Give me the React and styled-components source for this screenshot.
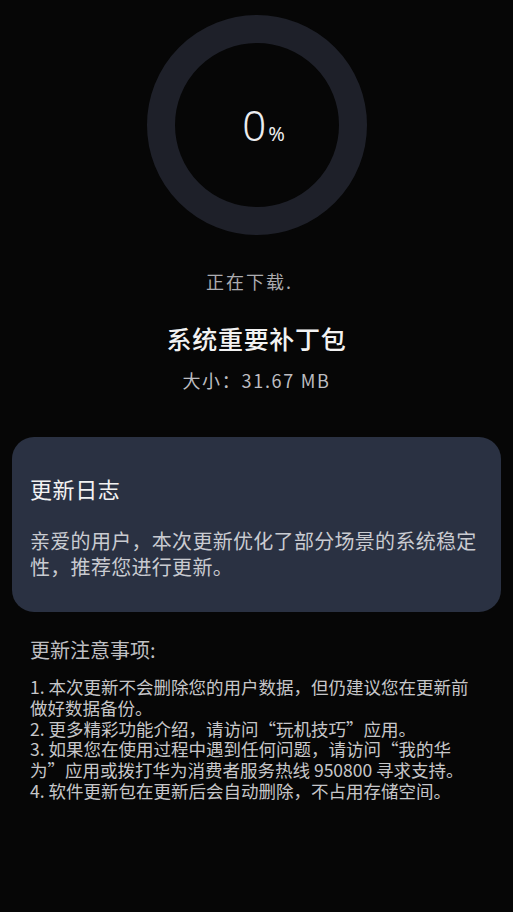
import React from "react"
import styled, { createGlobalStyle } from "styled-components"

const notes = [
  "1. 本次更新不会删除您的用户数据，但仍建议您在更新前做好数据备份。",
  "2. 更多精彩功能介绍，请访问“玩机技巧”应用。",
  "3. 如果您在使用过程中遇到任何问题，请访问“我的华为”应用或拨打华为消费者服务热线 950800 寻求支持。",
  "4. 软件更新包在更新后会自动删除，不占用存储空间。",
]

const App = () => {
  const progress = 0
  const r = 96
  const c = 2 * Math.PI * r

  return (
    <Page>
      <GlobalStyle />
      <Ring>
        <svg width="220" height="220" viewBox="0 0 220 220">
          <circle cx="110" cy="110" r={r} fill="none" stroke="#1e2029" strokeWidth="28" />
          <circle
            cx="110"
            cy="110"
            r={r}
            fill="none"
            stroke="#3d7dff"
            strokeWidth="28"
            strokeDasharray={`${(c * progress) / 100} ${c}`}
            transform="rotate(-90 110 110)"
          />
        </svg>
        <Percent>
          {progress}
          <small>%</small>
        </Percent>
      </Ring>

      <Status>
        正在下载.<Dots>..</Dots>
      </Status>
      <Title>系统重要补丁包</Title>
      <Size>大小：31.67 MB</Size>

      <Card>
        <CardTitle>更新日志</CardTitle>
        <CardText>亲爱的用户，本次更新优化了部分场景的系统稳定性，推荐您进行更新。</CardText>
      </Card>

      <Notes>
        <NotesTitle>更新注意事项:</NotesTitle>
        <NoteList>
          {notes.map((note, index) => (
            <NoteItem key={index}>{note}</NoteItem>
          ))}
        </NoteList>
      </Notes>
    </Page>
  )
}

export default App

const GlobalStyle = createGlobalStyle`
  html, body {
    margin: 0;
    padding: 0;
    background: #060606;
  }
  body {
    font-family: "Noto Sans CJK SC", "Noto Sans", sans-serif;
  }
`

const Page = styled.div`
  min-height: 100vh;
  background: #060606;
  display: flex;
  flex-direction: column;
  align-items: center;
  padding-top: 15px;
  box-sizing: border-box;
`

const Ring = styled.div`
  display: grid;
  place-items: center;
  width: 220px;
  height: 220px;

  & > * {
    grid-area: 1 / 1;
  }
`

const Percent = styled.div`
  font-family: "Noto Sans", "Noto Sans CJK SC", sans-serif;
  font-size: 42px;
  font-weight: 300;
  color: #ececee;
  line-height: 1;
  display: flex;
  align-items: baseline;
  margin-left: 14px;

  small {
    font-size: 20px;
    font-weight: 400;
    margin-left: 2px;
  }
`

const Status = styled.div`
  margin-top: 34px;
  font-size: 18px;
  line-height: 24px;
  letter-spacing: 2px;
  color: #acacb0;
`

const Dots = styled.span`
  visibility: hidden;
`

const Title = styled.div`
  margin-top: 29px;
  font-size: 25px;
  line-height: 32px;
  letter-spacing: 0.7px;
  font-weight: 500;
  color: #f2f2f2;
`

const Size = styled.div`
  margin-top: 14px;
  font-size: 18px;
  line-height: 24px;
  letter-spacing: 1.7px;
  color: #bdbdc1;
`

const Card = styled.div`
  align-self: stretch;
  margin: 45px 12px 0;
  padding: 37px 18px 33px;
  background: #2a3142;
  border-radius: 22px;
`

const CardTitle = styled.div`
  font-size: 22px;
  line-height: 28px;
  letter-spacing: 0.6px;
  color: #f2f2f2;
`

const CardText = styled.div`
  margin-top: 26px;
  font-size: 20px;
  line-height: 25.5px;
  letter-spacing: 0.3px;
  color: #c9cbd1;
`

const Notes = styled.div`
  align-self: stretch;
  margin-top: 25px;
  padding: 0 30px;
`

const NotesTitle = styled.div`
  font-size: 20px;
  line-height: 26px;
  color: #bfbfc2;
`

const NoteList = styled.div`
  margin-top: 14px;
  display: flex;
  flex-direction: column;
`

const NoteItem = styled.div`
  font-size: 17.5px;
  line-height: 20.8px;
  color: #c6c6c9;
`
